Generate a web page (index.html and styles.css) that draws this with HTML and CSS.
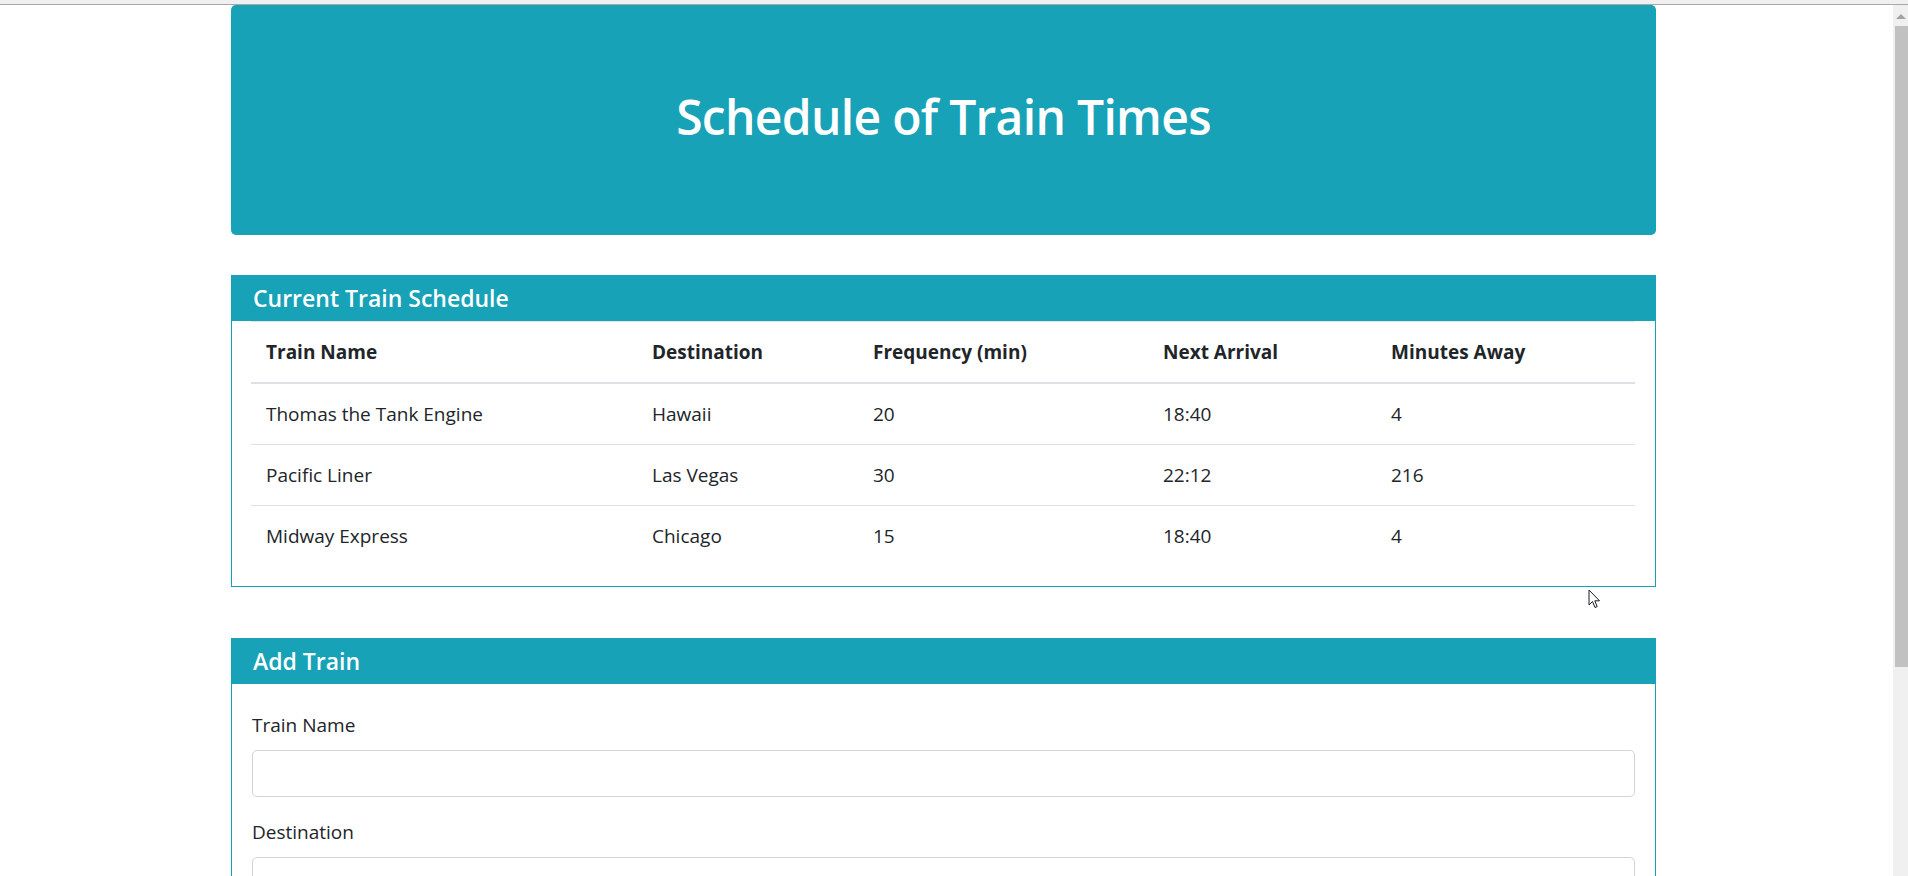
FILE: index.html
```html
<!DOCTYPE html>
<html lang="en">
<head>
<meta charset="utf-8">
<title>Train Scheduler</title>
<link rel="stylesheet" href="styles.css">
</head>
<body>
<div class="topbar"></div>
<div class="viewport">
  <main class="page">
    <header class="jumbotron">
      <h1 class="jumbo-title">Schedule of Train Times</h1>
    </header>

    <section class="card card-schedule">
      <div class="card-header"><h2 class="card-title">Current Train Schedule</h2></div>
      <table class="schedule">
        <thead>
          <tr>
            <th class="c1">Train Name</th>
            <th class="c2">Destination</th>
            <th class="c3">Frequency (min)</th>
            <th class="c4">Next Arrival</th>
            <th class="c5">Minutes Away</th>
          </tr>
        </thead>
        <tbody>
          <tr><td>Thomas the Tank Engine</td><td>Hawaii</td><td>20</td><td>18:40</td><td>4</td></tr>
          <tr><td>Pacific Liner</td><td>Las Vegas</td><td>30</td><td>22:12</td><td>216</td></tr>
          <tr><td>Midway Express</td><td>Chicago</td><td>15</td><td>18:40</td><td>4</td></tr>
        </tbody>
      </table>
    </section>

    <section class="card card-add">
      <div class="card-header"><h2 class="card-title">Add Train</h2></div>
      <form class="card-body">
        <div class="form-group">
          <label class="form-label" for="train-name">Train Name</label>
          <input class="form-control" id="train-name" type="text">
        </div>
        <div class="form-group">
          <label class="form-label" for="destination">Destination</label>
          <input class="form-control" id="destination" type="text">
        </div>
      </form>
    </section>
  </main>
  <div class="scrollbar">
    <div class="scroll-arrow"></div>
    <div class="scroll-thumb"></div>
  </div>
</div>
<svg class="cursor" width="14" height="22" viewBox="0 0 14 22"><path d="M1 1 L1 16 L4.5 12.5 L7 18.5 L9.2 17.6 L6.8 11.8 L11.5 11.8 Z" fill="#fff" stroke="#1a1a2a" stroke-width="1"/></svg>
</body>
</html>
```

FILE: styles.css
```css
* { box-sizing: border-box; }
html, body { margin: 0; padding: 0; height: 100%; overflow: hidden; }
body {
  background: #fff;
  color: #212529;
  font-family: "Open Sans", "Noto Sans", "DejaVu Sans", sans-serif;
  font-size: 19px;
  line-height: 30px;
}
.topbar {
  height: 5px;
  background: #f0f0f0;
  border-bottom: 1px solid #a8a8a8;
}
.viewport {
  display: flex;
  height: calc(100% - 5px);
}
.page {
  flex: 1;
  padding-left: 231px;
}
.jumbotron {
  width: 1425px;
  height: 230px;
  background: #17a2b8;
  border-radius: 5px;
  display: flex;
  justify-content: center;
  padding-top: 81px;
}
.jumbo-title {
  margin: 0;
  color: #fff;
  font-size: 48px;
  font-weight: 600;
  line-height: 62px;
  letter-spacing: -0.7px;
}
.card {
  width: 1425px;
  border: 1px solid #17a2b8;
  border-top: none;
  background: #fff;
}
.card-schedule { margin-top: 40px; }
.card-add { margin-top: 51px; }
.card-header {
  height: 46px;
  background: #17a2b8;
  margin: 0 -1px;
  padding-left: 22px;
  display: flex;
  align-items: center;
}
.card-title {
  margin: 0;
  color: #fff;
  font-size: 23px;
  font-weight: 600;
  line-height: 30px;
}
.schedule {
  width: 1384px;
  margin: 0 20px 20px 19px;
  border-collapse: collapse;
  table-layout: fixed;
}
.schedule th, .schedule td {
  text-align: left;
  padding: 15px;
  height: 60px;
  border-top: 1px solid #dee2e6;
  vertical-align: middle;
  white-space: nowrap;
}
.schedule th { font-weight: 700; border-bottom: 2px solid #dee2e6; }
.schedule td { font-weight: 400; }
.c1 { width: 386px; }
.c2 { width: 221px; }
.c3 { width: 290px; }
.c4 { width: 228px; }
.c5 { width: 259px; }
.card-body {
  padding: 26px 20px 10px 20px;
}
.form-group { margin-bottom: 20px; }
.form-label {
  display: block;
  margin-bottom: 10px;
  line-height: 30px;
}
.form-control {
  display: block;
  width: 100%;
  height: 47px;
  border: 1px solid #ced4da;
  border-radius: 5px;
  background: #fff;
  font: inherit;
}
.scrollbar {
  width: 15px;
  flex: none;
  background: #f0f0f0;
  display: flex;
  flex-direction: column;
  align-items: flex-end;
}
.scroll-arrow {
  width: 0;
  height: 0;
  margin: 9px 2px 0 0;
  border-left: 5px solid transparent;
  border-right: 5px solid transparent;
  border-bottom: 5px solid #a3a3a3;
}
.scroll-thumb {
  margin-top: 7px;
  width: 13px;
  height: 641px;
  background: #c1c1c1;
}
.cursor {
  position: fixed;
  left: 1588px;
  top: 589px;
}
```
